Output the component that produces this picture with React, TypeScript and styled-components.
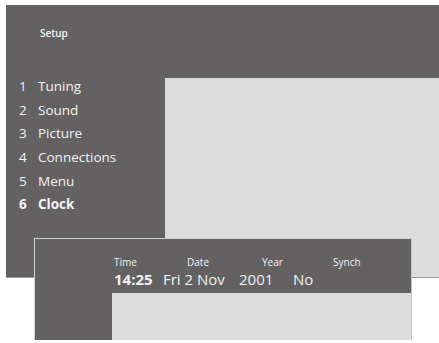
import React from 'react';
import styled, { createGlobalStyle } from 'styled-components';

// style
const GlobalStyle = createGlobalStyle`
  html, body {
    margin: 0;
    padding: 0;
    background: #fff;
  }

  body {
    font-family: "Open Sans", "Noto Sans", sans-serif;
    overflow: hidden;
  }
`;

const dark = '#636162';
const light = '#dcdcdc';
const ink = '#f3f3f3';

const Page = styled.div`
  width: 439px;
  height: 343px;
  position: relative;
  overflow: hidden;
`;

const Screen = styled.div`
  margin: 5px 0 0 6px;
  width: 440px;
  height: 272px;
  display: flex;
  flex-direction: column;
  background: ${dark};
  border-bottom: solid 1px #9a9a9a;
`;

const Header = styled.div`
  height: 69px;
  flex-shrink: 0;
  padding-left: 34px;
  box-sizing: border-box;
  display: flex;
  align-items: center;
`;

const HeaderTitle = styled.span`
  color: ${ink};
  font-size: 10px;
  font-weight: 600;
  margin-top: -13px;
`;

const Body = styled.div`
  flex: 1;
  display: flex;
  align-items: stretch;
`;

const Menu = styled.ol`
  width: 159px;
  flex-shrink: 0;
  margin: 0;
  padding: 0 0 0 13px;
  box-sizing: border-box;
  list-style: none;
`;

const MenuItem = styled.li<{ $active?: boolean }>`
  height: 23.7px;
  display: flex;
  align-items: center;
  color: ${ink};
  font-size: 13.5px;
  font-weight: ${(props) => (props.$active ? 700 : 400)};
`;

const MenuNumber = styled.span`
  width: 19px;
  flex-shrink: 0;
`;

const Pane = styled.div`
  flex: 1;
  margin-top: 4px;
  background: ${light};
`;

const Dialog = styled.div`
  position: absolute;
  left: 34px;
  top: 238px;
  width: 378px;
  height: 102px;
  display: flex;
  flex-direction: column;
  background: ${light};
  border-top: solid 1px #d2d2d2;
  border-left: solid 1px #d2d2d2;
  border-right: solid 1px #c4c4c4;
  box-sizing: border-box;
`;

const DialogBand = styled.div`
  height: 54px;
  flex-shrink: 0;
  background: ${dark};
  padding: 17px 0 0 79px;
  box-sizing: border-box;
  display: flex;
  flex-direction: column;
  gap: 3px;
`;

const FieldRow = styled.div`
  display: flex;
  align-items: baseline;
`;

const FieldLabel = styled.span<{ $width?: number }>`
  width: ${(props) => (props.$width ? `${props.$width}px` : 'auto')};
  flex-shrink: 0;
  color: ${ink};
  font-size: 10px;
  line-height: 12px;
`;

const FieldValue = styled.span<{ $width?: number; $bold?: boolean }>`
  width: ${(props) => (props.$width ? `${props.$width}px` : 'auto')};
  flex-shrink: 0;
  color: ${ink};
  font-size: 15px;
  line-height: 16px;
  font-weight: ${(props) => (props.$bold ? 700 : 400)};
  white-space: nowrap;
`;

const DialogBody = styled.div`
  flex: 1;
  display: flex;
`;

const DialogSide = styled.div`
  width: 77px;
  background: ${dark};
`;

const menuItems = ['Tuning', 'Sound', 'Picture', 'Connections', 'Menu', 'Clock'];

const labels = [
  { text: 'Time', width: 73 },
  { text: 'Date', width: 75 },
  { text: 'Year', width: 71 },
  { text: 'Synch' },
];

const values = [
  { text: '14:25', width: 49, bold: true },
  { text: 'Fri 2 Nov', width: 76 },
  { text: '2001', width: 54 },
  { text: 'No' },
];

export default function App() {
  return (
    <Page>
      <GlobalStyle />
      <Screen>
        <Header>
          <HeaderTitle>Setup</HeaderTitle>
        </Header>
        <Body>
          <Menu>
            {menuItems.map((item, i) => (
              <MenuItem key={item} $active={i === menuItems.length - 1}>
                <MenuNumber>{i + 1}</MenuNumber>
                {item}
              </MenuItem>
            ))}
          </Menu>
          <Pane />
        </Body>
      </Screen>

      <Dialog>
        <DialogBand>
          <FieldRow>
            {labels.map((l) => (
              <FieldLabel key={l.text} $width={l.width}>{l.text}</FieldLabel>
            ))}
          </FieldRow>
          <FieldRow>
            {values.map((v) => (
              <FieldValue key={v.text} $width={v.width} $bold={v.bold}>{v.text}</FieldValue>
            ))}
          </FieldRow>
        </DialogBand>
        <DialogBody>
          <DialogSide />
        </DialogBody>
      </Dialog>
    </Page>
  );
}
